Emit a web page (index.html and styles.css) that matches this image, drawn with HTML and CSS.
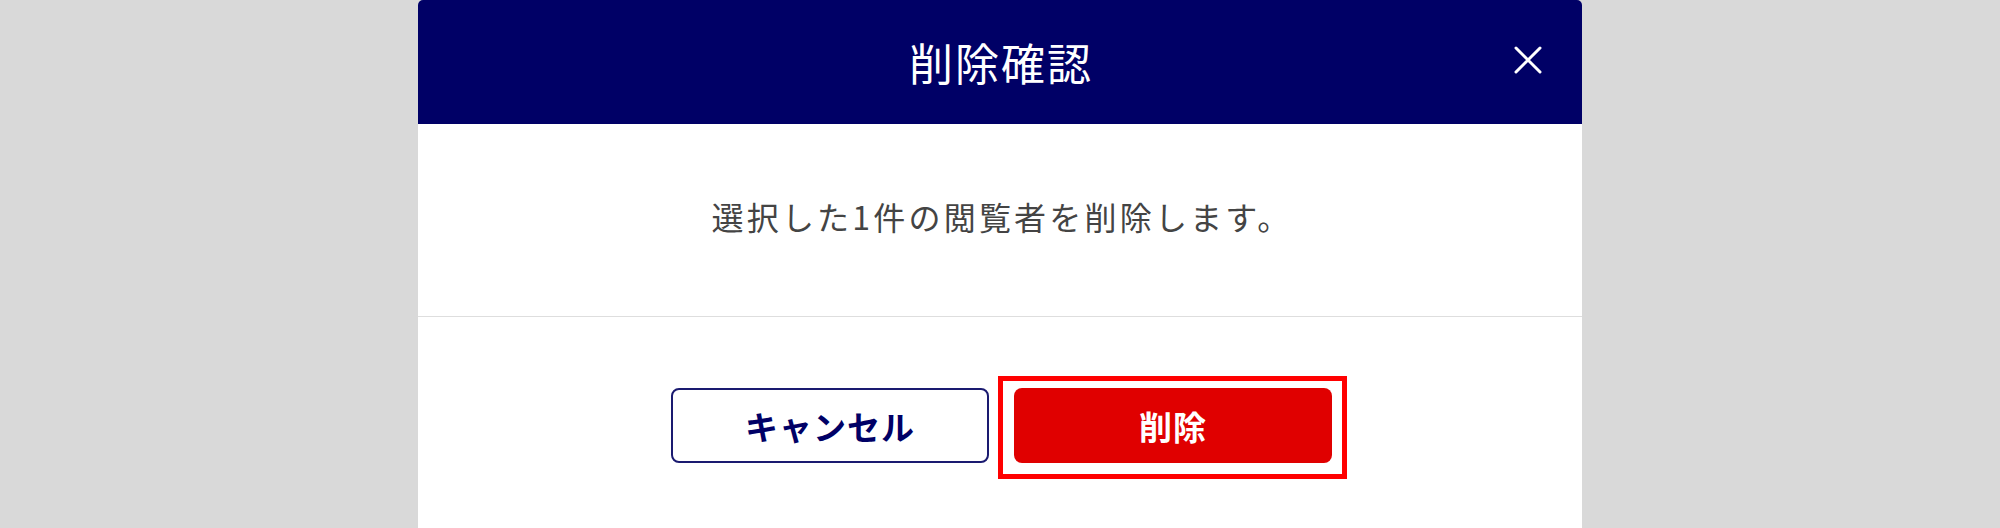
FILE: index.html
```html
<!DOCTYPE html>
<html lang="ja">
<head>
<meta charset="utf-8">
<title>削除確認</title>
<link rel="stylesheet" href="styles.css">
</head>
<body>
<div class="modal">
  <div class="modal-header">
    <h1 class="modal-title">削除確認</h1>
    <button class="close-btn" aria-label="閉じる">
      <svg width="28" height="28" viewBox="0 0 28 28"><path d="M2 2 L26 26 M26 2 L2 26" stroke="#fff" stroke-width="3" stroke-linecap="round" fill="none"/></svg>
    </button>
  </div>
  <div class="modal-body">
    <p class="message">選択した1件の閲覧者を削除します。</p>
  </div>
  <div class="modal-footer">
    <button class="btn btn-cancel">キャンセル</button>
    <button class="btn btn-delete">削除</button>
  </div>
</div>
</body>
</html>
```
FILE: styles.css
```css
html, body {
  margin: 0;
  padding: 0;
  height: 100%;
  overflow: hidden;
}
body {
  background: #d9d9d9;
  font-family: "Noto Sans CJK JP", "Noto Sans", sans-serif;
}
.modal {
  width: 1164px;
  margin: 0 auto;
  background: #fff;
  border-radius: 5px 5px 0 0;
  min-height: 528px;
}
.modal-header {
  position: relative;
  height: 124px;
  background: #000066;
  border-radius: 5px 5px 0 0;
  display: flex;
  align-items: center;
  justify-content: center;
}
.modal-title {
  margin: 0;
  color: #fff;
  font-size: 44px;
  font-weight: 400;
  letter-spacing: 2px;
  line-height: 1;
  padding-left: 2px;
}
.close-btn {
  position: absolute;
  right: 40px;
  top: 46px;
  width: 28px;
  height: 28px;
  padding: 0;
  border: 0;
  background: transparent;
  display: flex;
  cursor: pointer;
}
.modal-body {
  height: 192px;
  border-bottom: 1px solid #dedede;
  display: flex;
  align-items: center;
  justify-content: center;
}
.message {
  margin: 0;
  color: #444;
  font-size: 32px;
  letter-spacing: 3.2px;
  line-height: 1;
  padding-bottom: 8px;
  padding-left: 4px;
}
.modal-footer {
  display: flex;
  justify-content: center;
  gap: 25px;
  padding-top: 71px;
  padding-left: 3px;
}
.btn {
  width: 318px;
  height: 75px;
  border-radius: 8px;
  font-family: "Noto Sans CJK JP", "Noto Sans", sans-serif;
  font-size: 33px;
  font-weight: 700;
  letter-spacing: 1px;
  cursor: pointer;
  box-sizing: border-box;
}
.btn-cancel {
  background: #fff;
  color: #000066;
  border: 2px solid #1a1a70;
}
.btn-delete {
  position: relative;
  background: #e00000;
  color: #fff;
  border: 0;
}
.btn-delete::after {
  content: "";
  position: absolute;
  left: -16px;
  right: -15px;
  top: -12px;
  bottom: -16px;
  border: 5px solid #ff0000;
  pointer-events: none;
}
```
